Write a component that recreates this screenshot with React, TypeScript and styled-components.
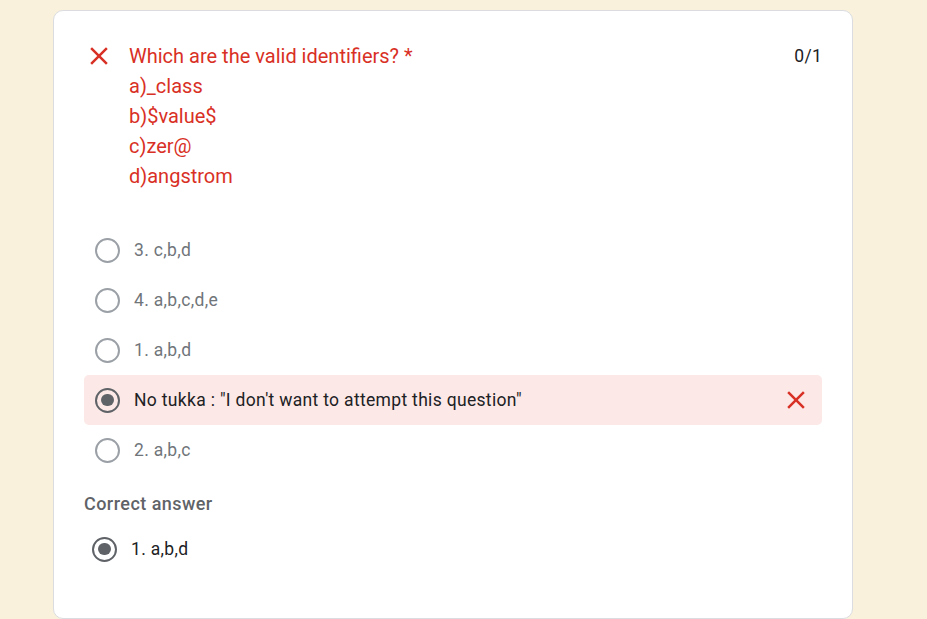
import React from "react";
import styled, { createGlobalStyle } from "styled-components";

const GlobalStyle = createGlobalStyle`
  html, body {
    margin: 0;
    padding: 0;
    background: #f9f1dc;
    font-family: Roboto, "Liberation Sans", Arial, sans-serif;
  }
  * { box-sizing: border-box; }
`;

const Page = styled.div`
  padding: 10px 0 0 53px;
  min-height: 619px;
`;

const Card = styled.section`
  width: 800px;
  background: #ffffff;
  border: 1px solid #dadce0;
  border-radius: 10px;
  padding: 30px 30px 44px 30px;
`;

const Header = styled.div`
  display: flex;
  align-items: flex-start;
`;

const IconBox = styled.span<{ $gap?: number }>`
  display: inline-flex;
  width: 30px;
  height: 30px;
  flex: none;
  align-items: center;
  justify-content: center;
  margin-right: ${(p) => p.$gap ?? 0}px;
  color: #d93025;
`;

const Title = styled.div`
  flex: 1;
  color: #d93025;
  font-size: 20px;
  line-height: 30px;
`;

const Score = styled.div`
  font-size: 17.5px;
  line-height: 30px;
  color: #202124;
  letter-spacing: 0.25px;
`;

const Options = styled.div`
  margin-top: 34px;
  display: flex;
  flex-direction: column;
`;

const OptionRow = styled.div<{ $wrong?: boolean; $pad?: number }>`
  height: 50px;
  display: flex;
  align-items: center;
  padding: 0 11px 0 ${(p) => p.$pad ?? 11}px;
  border-radius: 5px;
  background: ${(p) => (p.$wrong ? "#fce8e6" : "transparent")};
`;

const Radio = styled.span<{ $checked?: boolean }>`
  width: 25px;
  height: 25px;
  flex: none;
  border-radius: 50%;
  border: 2.5px solid ${(p) => (p.$checked ? "#5f6368" : "#9aa0a6")};
  display: inline-flex;
  align-items: center;
  justify-content: center;
  &::after {
    content: "";
    display: ${(p) => (p.$checked ? "block" : "none")};
    width: 12.5px;
    height: 12.5px;
    border-radius: 50%;
    background: #5f6368;
  }
`;

const OptionText = styled.span<{ $selected?: boolean; $gap?: number }>`
  flex: 1;
  margin-left: ${(p) => p.$gap ?? 14}px;
  font-size: 17.5px;
  letter-spacing: 0.32px;
  color: ${(p) => (p.$selected ? "#202124" : "#70757a")};
`;

const CorrectLabel = styled.div`
  margin-top: 16px;
  font-size: 18px;
  line-height: 25px;
  font-weight: 500;
  letter-spacing: 0.45px;
  color: #5f6368;
`;

const CorrectList = styled.div`
  margin-top: 8px;
`;

const CloseIcon = () => (
  <svg width="30" height="30" viewBox="0 0 24 24" fill="currentColor">
    <path d="M19 6.41L17.59 5 12 10.59 6.41 5 5 6.41 10.59 12 5 17.59 6.41 19 12 13.41 17.59 19 19 17.59 13.41 12z" />
  </svg>
);

const titleLines = [
  "Which are the valid identifiers? *",
  "a)_class",
  "b)$value$",
  "c)zer@",
  "d)angstrom",
];

const options = [
  { label: "3. c,b,d" },
  { label: "4. a,b,c,d,e" },
  { label: "1. a,b,d" },
  { label: "No tukka : \"I don't want to attempt this question\"", chosen: true },
  { label: "2. a,b,c" },
];

export default function App() {
  return (
    <>
      <GlobalStyle />
      <Page>
        <Card>
          <Header>
            <IconBox $gap={15}>
              <CloseIcon />
            </IconBox>
            <Title>
              {titleLines.map((l) => (
                <div key={l}>{l}</div>
              ))}
            </Title>
            <Score>0/1</Score>
          </Header>
          <Options>
            {options.map((o) => (
              <OptionRow key={o.label} $wrong={o.chosen}>
                <Radio $checked={o.chosen} />
                <OptionText $selected={o.chosen}>{o.label}</OptionText>
                {o.chosen && (
                  <IconBox>
                    <CloseIcon />
                  </IconBox>
                )}
              </OptionRow>
            ))}
          </Options>
          <CorrectLabel>Correct answer</CorrectLabel>
          <CorrectList>
            <OptionRow $pad={8}>
              <Radio $checked />
              <OptionText $selected $gap={14}>1. a,b,d</OptionText>
            </OptionRow>
          </CorrectList>
        </Card>
      </Page>
    </>
  );
}
